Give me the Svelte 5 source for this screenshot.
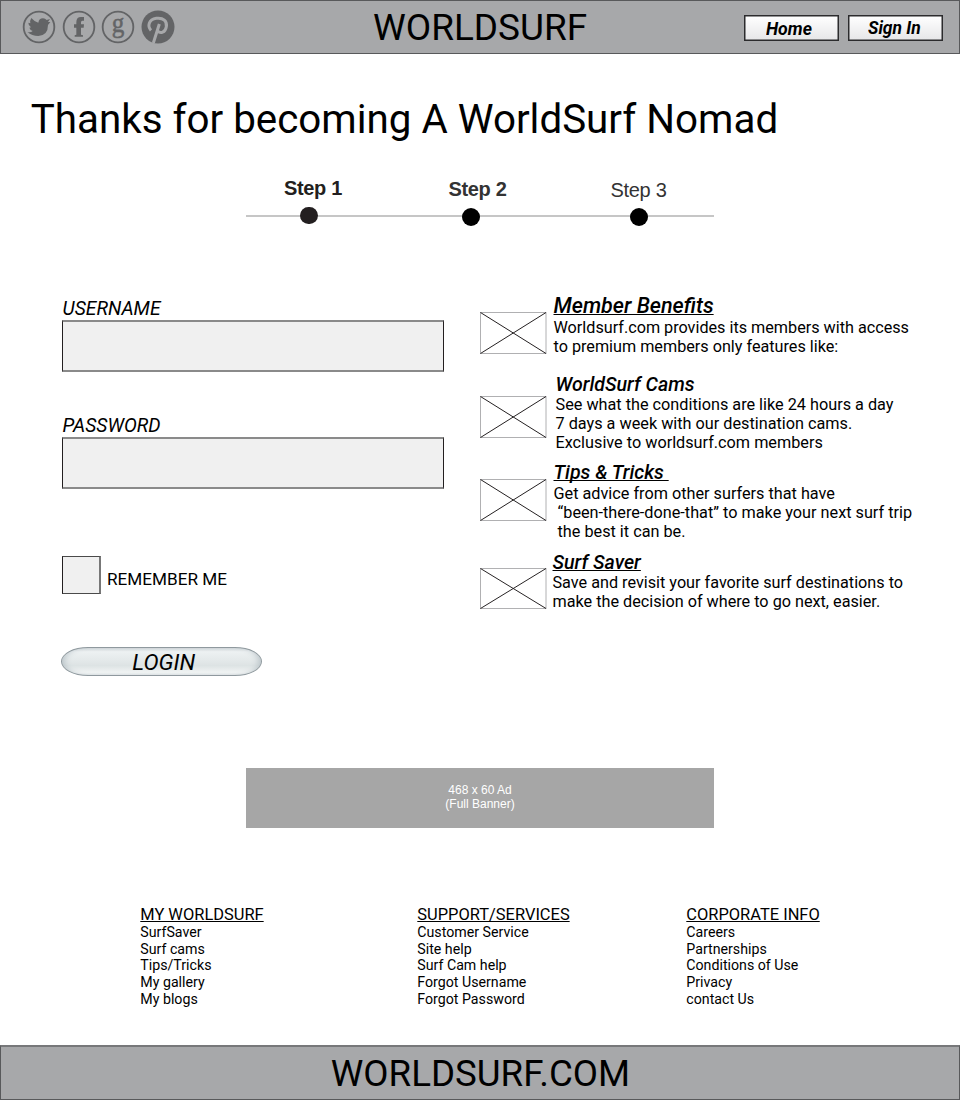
<script>
  const steps = [
    { label: 'Step 1', kind: 'first' },
    { label: 'Step 2', kind: 'second' },
    { label: 'Step 3', kind: 'third' }
  ];

  const benefits = [
    {
      kind: 'member',
      title: 'Member Benefits',
      lines: ['Worldsurf.com provides its members with access', 'to premium members only features like:']
    },
    {
      kind: 'cams',
      title: 'WorldSurf Cams',
      lines: [
        'See what the conditions are like 24 hours a day',
        '7 days a week with our destination cams.',
        'Exclusive to worldsurf.com members'
      ]
    },
    {
      kind: 'tips',
      title: 'Tips & Tricks ',
      lines: [
        'Get advice from other surfers that have',
        ' “been-there-done-that” to make your next surf trip',
        ' the best it can be.'
      ]
    },
    {
      kind: 'saver',
      title: 'Surf Saver',
      lines: ['Save and revisit your favorite surf destinations to', 'make the decision of where to go next, easier.']
    }
  ];

  const columns = [
    { title: 'MY WORLDSURF', links: ['SurfSaver', 'Surf cams', 'Tips/Tricks', 'My gallery', 'My blogs'] },
    { title: 'SUPPORT/SERVICES', links: ['Customer Service', 'Site help', 'Surf Cam help', 'Forgot Username', 'Forgot Password'] },
    { title: 'CORPORATE INFO', links: ['Careers', 'Partnerships', 'Conditions of Use', 'Privacy', 'contact Us'] }
  ];
</script>

<div class="page">
  <header class="bar top">
    <div class="social">
      <svg viewBox="64 30 102 102" aria-hidden="true">
        <circle class="ring" cx="115" cy="81" r="46" />
        <path d="M92 54Q101 65 113 68Q115 55 127 55Q134 55 138 60L148 57L142 66L149 66L142 75Q142 106 113 108Q94 108 80 96Q91 98 96 93Q88 90 86 83L91 82Q83 77 83 68L89 70Q87 62 92 54Z" />
      </svg>
      <svg viewBox="186 30 102 102" aria-hidden="true">
        <circle class="ring" cx="237" cy="81" r="46" />
        <path d="M222 73H229V67Q229 51 243 51H252V62H247Q243 62 243 67V73H252L251 83H243V104L249 106V110H224V106L229 104V83H222Z" />
      </svg>
      <svg viewBox="303 30 102 102" aria-hidden="true">
        <circle class="ring" cx="354" cy="81" r="46" />
        <text transform="translate(354 96) scale(0.92 1)" text-anchor="middle">g</text>
      </svg>
      <svg viewBox="424 30 102 102" aria-hidden="true">
        <circle cx="475" cy="81" r="49.5" />
        <path class="pin" d="M454 91C443 80 446 58 470 55C491 52 503 64 500 80C497 98 482 102 474 93M479 72L461 129" />
      </svg>
    </div>
    <div class="brand">WORLDSURF</div>
    <nav>
      <button class="home"><span>Home</span></button>
      <button class="signin"><span>Sign In</span></button>
    </nav>
  </header>

  <h1>Thanks for becoming A WorldSurf Nomad</h1>

  <ol class="steps">
    {#each steps as step}
      <li class={step.kind}><span>{step.label}</span><i></i></li>
    {/each}
  </ol>

  <main>
    <form onsubmit={(e) => e.preventDefault()}>
      <label class="field"><span>USERNAME</span><input type="text" /></label>
      <label class="field"><span>PASSWORD</span><input type="password" /></label>
      <label class="remember"><input type="checkbox" /><span>REMEMBER ME</span></label>
      <button class="login"><span>LOGIN</span></button>
    </form>

    <div class="benefits">
      {#each benefits as b}
        <section class={b.kind}>
          <svg class="thumb" viewBox="0 0 67 42" preserveAspectRatio="none" aria-hidden="true">
            <rect x="0.5" y="0.5" width="66" height="41" />
            <path d="M0.5 0.5L66.5 41.5M66.5 0.5L0.5 41.5" />
          </svg>
          <div class="copy">
            <h2>{b.title}</h2>
            {#each b.lines as line}<p>{line}</p>{/each}
          </div>
        </section>
      {/each}
    </div>
  </main>

  <aside class="ad">468 x 60 Ad<br />(Full Banner)</aside>

  <div class="links">
    {#each columns as col}
      <div>
        <h3>{col.title}</h3>
        <ul>{#each col.links as link}<li>{link}</li>{/each}</ul>
      </div>
    {/each}
  </div>

  <footer class="bar bottom"><div class="brand">WORLDSURF.COM</div></footer>
</div>

<style>
  :global(body) { margin: 0; background: #fff; }
  .page {
    box-sizing: border-box;
    width: 960px;
    height: 1100px;
    overflow: hidden;
    display: flex;
    flex-direction: column;
    font-family: Roboto, sans-serif;
    color: #000;
    background: #fff;
  }
  h1, h2, h3, p, ol, ul { margin: 0; padding: 0; font-weight: 400; list-style: none; }
  button, input { font-family: inherit; color: inherit; margin: 0; padding: 0; box-sizing: border-box; }

  .bar {
    box-sizing: border-box;
    flex: none;
    background: #a7a8aa;
    border: 1px solid #58595b;
  }
  .brand { font-size: 36.95px; line-height: 43px; white-space: nowrap; }
  .top {
    height: 54px;
    display: grid;
    grid-template-columns: 372px 370px 1fr;
    align-items: start;
  }
  .top .brand { padding-top: 5px; }

  .social { display: flex; padding: 9px 0 0 20.5px; }
  .social svg { width: 34px; height: 34px; fill: #636466; overflow: visible; }
  .social svg:nth-child(2) { margin-left: 6.5px; }
  .social svg:nth-child(3) { margin-left: 5px; }
  .social svg:nth-child(4) { margin-left: 6.3px; }
  .social .ring { fill: none; stroke: #636466; stroke-width: 5.5; }
  .social text { font: 82px "Liberation Serif", serif; stroke: #636466; stroke-width: 1.5; }
  .social .pin { fill: none; stroke: #a7a8aa; stroke-width: 9; }

  nav { display: flex; gap: 9px; padding: 14px 0 0 1px; }
  nav button {
    width: 95px;
    height: 26px;
    border: 1px solid #2b2b2d;
    box-shadow: inset 0 0 0 0.5px #2b2b2d;
    background: linear-gradient(#fff, #e6e6e8);
    font-size: 19px;
    font-style: italic;
    font-weight: 700;
    line-height: 22px;
    text-align: left;
    white-space: nowrap;
  }
  nav span { display: block; width: max-content; transform: scaleX(0.93); transform-origin: 0 0; }
  nav .home { padding: 1px 0 0 21.3px; }
  nav .signin { padding: 0 0 1px 19.3px; }
  nav .signin span { transform: scaleX(0.915); }

  h1 { margin: 42px 0 0 30.8px; font-size: 40.33px; line-height: 47px; white-space: nowrap; }

  .steps {
    position: relative;
    width: 468px;
    height: 50px;
    margin: 34px 0 0 246px;
    display: grid;
    grid-template-columns: 126px 198px 138px;
    font: 20px/22px "Liberation Sans", Arial, sans-serif;
    letter-spacing: -0.3px;
    color: #333;
  }
  .steps::before {
    content: '';
    position: absolute;
    left: 0;
    top: 38px;
    width: 468px;
    height: 2px;
    background: #c6c6c6;
  }
  .steps li { display: flex; flex-direction: column; align-items: center; position: relative; }
  .steps i { width: 18.4px; height: 18.4px; border-radius: 50%; background: #000; margin-top: 8.8px; }
  .first { color: #231f20; font-weight: 700; }
  .first span { padding-left: 8px; }
  .steps .first i { width: 17.4px; height: 17.4px; background: #231f20; margin-top: 7.8px; }
  .second { padding-top: 1px; font-weight: 700; }
  .second span { padding-left: 13px; }
  .third { padding-top: 2px; }
  .third span { padding-right: 1px; }
  .steps .second i { margin-top: 7.8px; }
  .steps .third i { margin-top: 6.8px; }

  main { display: grid; grid-template-columns: 418px 1fr; padding: 66px 0 0 62px; height: 474px; box-sizing: border-box; }
  form { display: flex; flex-direction: column; align-items: flex-start; padding-top: 4px; }
  .field { display: flex; flex-direction: column; font-size: 19.25px; font-style: italic; line-height: 23px; }
  .field span { padding-left: 0.6px; }
  .field input {
    width: 382px;
    height: 52px;
    border: solid #8a8a8a;
    border-width: 2px 1px;
    border-left-color: #231f20;
    border-right-color: #231f20;
    background: #f0f0f0;
    border-radius: 0;
    outline: none;
  }
  .field + .field { margin-top: 42px; }
  .remember { display: flex; margin-top: 67px; font-size: 17.15px; line-height: 20px; }
  .remember input {
    appearance: none;
    width: 39px;
    height: 38px;
    background: #f0f0f0;
    border: 1px solid #4a4a4a;
    border-width: 1px 2px 1px 1px;
    border-right-color: #777;
    border-left-color: #231f20;
  }
  .remember span { padding: 13px 0 0 6px; }
  .login {
    width: 201px;
    height: 29px;
    margin: 53px 0 0 -1px;
    border: 1px solid #8f999e;
    border-radius: 28px / 15px;
    background: linear-gradient(#d3d9dc 0, #edf1f2 14%, #e4e9ea 45%, #dde3e4 65%, #f1f4f4 92%, #e4e9ea 100%);
    box-shadow: inset 6px 0 6px -4px #b9c3c8, inset -6px 0 6px -4px #b9c3c8;
    font-size: 22.7px;
    font-style: italic;
    line-height: 27px;
    text-align: left;
  }
  .login span { display: block; padding: 1px 0 0 70.3px; }

  section { display: flex; }
  .thumb { flex: none; width: 66.5px; height: 42px; fill: none; stroke: #231f20; stroke-width: 1; }
  .thumb rect { stroke: #b0b0b2; }
  .copy { font-size: 16.22px; line-height: 19px; }
  p { white-space: pre; }
  h2 {
    width: max-content;
    font-size: 19.6px;
    font-style: italic;
    font-weight: 500;
    line-height: 23px;
    white-space: pre;
    text-decoration: underline 1px;
    text-underline-offset: 1px;
    text-decoration-skip-ink: none;
  }
  .member { height: 80px; }
  .member .thumb { margin-top: 19px; }
  .member .copy { padding-left: 7px; font-size: 16.19px; }
  .member h2 { font-size: 21.5px; line-height: 25px; }
  .cams { height: 88px; }
  .cams .thumb { margin-top: 23px; }
  .cams .copy { padding-left: 9px; font-size: 16.24px; }
  .cams h2 { text-decoration: none; margin-bottom: -1px; }
  .tips { height: 90px; }
  .tips .thumb { margin-top: 18px; }
  .tips .copy { padding-left: 7px; font-size: 16.24px; }
  .saver .thumb { margin-top: 17px; height: 41px; }
  .saver .copy { padding-left: 6px; }
  .saver h2 { margin-bottom: -1px; }

  .ad {
    box-sizing: border-box;
    width: 468px;
    height: 60px;
    margin: 67px auto 0;
    padding-top: 15px;
    background: #a6a6a6;
    color: #fff;
    font: 12px/14px "Liberation Sans", Arial, sans-serif;
    text-align: center;
  }

  .links { display: grid; grid-template-columns: 277px 269px 1fr; margin: 77px 0 0 140.3px; }
  h3 { width: max-content; font-size: 16.45px; line-height: 19px; text-decoration: underline 1px; text-underline-offset: 1px; }
  .links ul { margin-top: -0.1px; font-size: 14.2px; line-height: 16.75px; }

  .bottom { height: 55px; margin-top: auto; border-top: 2px solid #77787a; padding: 5px 0 0 329.8px; }
  .bottom .brand { font-size: 36.7px; }
</style>
